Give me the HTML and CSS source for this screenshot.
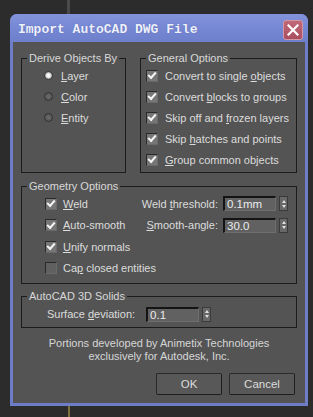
FILE: index.html
```html
<!DOCTYPE html>
<html>
<head>
<meta charset="utf-8">
<link rel="stylesheet" href="styles.css">
</head>
<body>
<div class="desk desk-top"><div class="desk-line grey"></div></div>
<div class="window">
  <div class="titlebar">
    <span class="title">Import AutoCAD DWG File</span>
    <span class="close"><svg width="12" height="12" viewBox="0 0 12 12"><path d="M1.5 1.5 L10.5 10.5 M10.5 1.5 L1.5 10.5" stroke="#fff" stroke-width="2.2" stroke-linecap="square"/></svg></span>
  </div>
  <div class="client">
    <div class="row-top">
      <fieldset class="group derive">
        <legend>Derive Objects By</legend>
        <div class="opt"><span class="radio on"></span><span><u>L</u>ayer</span></div>
        <div class="opt"><span class="radio"></span><span><u>C</u>olor</span></div>
        <div class="opt"><span class="radio"></span><span><u>E</u>ntity</span></div>
      </fieldset>
      <fieldset class="group general">
        <legend>General Options</legend>
        <div class="opt"><span class="check on"></span><span>Convert to single <u>o</u>bjects</span></div>
        <div class="opt"><span class="check on"></span><span>Convert <u>b</u>locks to groups</span></div>
        <div class="opt"><span class="check on"></span><span>Skip off and <u>f</u>rozen layers</span></div>
        <div class="opt"><span class="check on"></span><span>Skip <u>h</u>atches and points</span></div>
        <div class="opt"><span class="check on"></span><span><u>G</u>roup common objects</span></div>
      </fieldset>
    </div>
    <fieldset class="group geometry">
      <legend>Geometry Options</legend>
      <div class="geo">
        <div class="geo-left">
          <div class="opt"><span class="check on"></span><span><u>W</u>eld</span></div>
          <div class="opt"><span class="check on"></span><span><u>A</u>uto-smooth</span></div>
          <div class="opt"><span class="check on"></span><span><u>U</u>nify normals</span></div>
          <div class="opt"><span class="check"></span><span>Ca<u>p</u> closed entities</span></div>
        </div>
        <div class="geo-right">
          <div class="field"><span class="flabel">Weld <u>t</u>hreshold:</span><span class="input">0.1mm</span><span class="spin"><i class="up"></i><i class="down"></i></span></div>
          <div class="field"><span class="flabel"><u>S</u>mooth-angle:</span><span class="input">30.0</span><span class="spin"><i class="up"></i><i class="down"></i></span></div>
        </div>
      </div>
    </fieldset>
    <fieldset class="group solids">
      <legend>AutoCAD 3D Solids</legend>
      <div class="field solid-field"><span class="flabel">Surface <u>d</u>eviation:</span><span class="input">0.1</span><span class="spin"><i class="up"></i><i class="down"></i></span></div>
    </fieldset>
    <p class="credit">Portions developed by Animetix Technologies<br>exclusively for Autodesk, Inc.</p>
    <div class="buttons">
      <button class="btn">OK</button>
      <button class="btn">Cancel</button>
    </div>
  </div>
</div>
<div class="desk desk-bottom"><div class="desk-line yellow"></div></div>
</body>
</html>
```
FILE: styles.css
```css
html, body {
  margin: 0;
  padding: 0;
}
body {
  width: 313px;
  height: 417px;
  overflow: hidden;
  background: #2c2c2c;
  font-family: "Liberation Sans", Arial, sans-serif;
  font-size: 11px;
  color: #dcdcdc;
}
.desk {
  display: flex;
}
.desk-top {
  height: 14px;
}
.desk-bottom {
  height: 11px;
}
.desk-line {
  width: 3px;
  height: 100%;
}
.desk-line.grey {
  margin-left: 67px;
  background: #4a4a4a;
}
.desk-line.yellow {
  margin-left: 68px;
  background: #7f7040;
  width: 2px;
}
.window {
  margin-left: 10px;
  width: 298px;
  height: 392px;
  box-sizing: border-box;
  background: #6d7dc8;
  border-radius: 7px 7px 0 0;
  padding: 0 3px 3px 3px;
  display: flex;
  flex-direction: column;
}
.titlebar {
  height: 28px;
  margin: 0 -3px;
  border-radius: 7px 7px 0 0;
  background: linear-gradient(#8393db, #7485d2 60%, #6e7fcc);
  display: flex;
  align-items: center;
  padding: 0 5px 0 8px;
  flex-shrink: 0;
}
.title {
  flex: 1;
  font-family: "Liberation Mono", "DejaVu Sans Mono", monospace;
  font-weight: bold;
  font-size: 13px;
  color: #eef0fb;
  padding-top: 3px;
  text-shadow: 0 0 1px #5060a8;
}
.close {
  width: 20px;
  height: 20px;
  box-sizing: border-box;
  border: 1px solid #d596a2;
  border-radius: 3px;
  background: linear-gradient(#c06878, #a84e60);
  display: flex;
  align-items: center;
  justify-content: center;
  margin-top: 3px;
}
.client {
  flex: 1;
  background: #545454;
  padding: 9px 8px 0 8px;
  display: flex;
  flex-direction: column;
}
.row-top {
  display: flex;
  gap: 14px;
}
.group {
  margin: 0;
  border: 1px solid #1c1c1c;
  min-width: 0;
  box-sizing: border-box;
}
.group legend {
  font-size: 11px;
  line-height: 14px;
  padding: 0 2px;
  color: #d8d8d8;
  white-space: nowrap;
}
.derive {
  width: 105px;
  padding: 0 0 2px 22px;
}
.derive legend {
  margin-left: -17px;
}
.general {
  flex: 1;
  padding: 0 0 2px 5px;
}
.general legend {
  margin-left: 0;
}
.opt {
  display: flex;
  align-items: center;
  gap: 7px;
  height: 21px;
  white-space: nowrap;
}
.derive .opt {
  gap: 8px;
}
u {
  text-decoration: underline;
  text-underline-offset: 1px;
}
.radio {
  width: 9px;
  height: 9px;
  border-radius: 50%;
  box-sizing: border-box;
  background: radial-gradient(circle at 50% 50%, #6a6a6a 0, #5a5a5a 60%, #3a3a3a 100%);
  border: 1px solid #333;
  flex-shrink: 0;
}
.radio.on {
  background: radial-gradient(circle at 50% 50%, #ffffff 0, #f0f0f0 35%, #a8a8a8 70%, #666 100%);
  border-color: #3a3a3a;
}
.check {
  width: 12px;
  height: 12px;
  box-sizing: border-box;
  border: 1px solid #2a2a2a;
  border-right-color: #6a6a6a;
  border-bottom-color: #6a6a6a;
  background: #606060;
  flex-shrink: 0;
  display: flex;
  align-items: center;
  justify-content: center;
}
.check.on {
  background: #767676;
}
.check.on::after {
  content: "";
  width: 6px;
  height: 3px;
  border-left: 2px solid #f4f4f4;
  border-bottom: 2px solid #f4f4f4;
  transform: translate(0, -1px) rotate(-48deg);
}
.geometry {
  margin-top: 6px;
  padding: 0 8px 4px 23px;
}
.geometry legend {
  margin-left: -18px;
}
.geo {
  display: flex;
  justify-content: space-between;
}
.geo-left {
  flex: 0 0 80px;
  min-width: 0;
}
.geo-left .opt {
  height: 21.5px;
  gap: 6px;
}
.geo-right {
  display: flex;
  flex-direction: column;
}
.field {
  display: flex;
  align-items: center;
  height: 21.5px;
  justify-content: flex-end;
}
.flabel {
  margin-right: 5px;
  white-space: nowrap;
}
.input {
  width: 53px;
  height: 15px;
  box-sizing: border-box;
  background: #616161;
  border-top: 2px solid #141414;
  border-left: 2px solid #141414;
  border-right: 1px solid #6e6e6e;
  border-bottom: 1px solid #6e6e6e;
  color: #ececec;
  font-size: 11.5px;
  line-height: 12px;
  padding-left: 2px;
}
.spin {
  width: 9px;
  height: 15px;
  margin-left: 3px;
  box-sizing: border-box;
  background: #686868;
  border: 1px solid #3a3a3a;
  display: flex;
  flex-direction: column;
  align-items: center;
  justify-content: center;
  gap: 2px;
}
.spin i {
  display: block;
  width: 0;
  height: 0;
  border-left: 2.5px solid transparent;
  border-right: 2.5px solid transparent;
}
.spin .up {
  border-bottom: 3px solid #e0e0e0;
}
.spin .down {
  border-top: 3px solid #e0e0e0;
}
.solids {
  margin-top: 5px;
  padding: 0 0 2px 25px;
}
.solids legend {
  margin-left: -20px;
}
.solid-field {
  justify-content: flex-start;
  height: 22px;
}
.solid-field .flabel {
  margin-right: 11px;
}
.credit {
  margin: 9px 0 0 0;
  text-align: center;
  line-height: 13px;
  color: #d6d6d6;
}
.buttons {
  display: flex;
  justify-content: flex-end;
  gap: 7px;
  margin-top: 10px;
  padding-right: 2px;
}
.btn {
  width: 66px;
  height: 22px;
  background: #585858;
  border: 1px solid #2a2a2a;
  border-right-color: #1e1e1e;
  border-bottom-color: #1e1e1e;
  border-radius: 2px;
  color: #dcdcdc;
  font-family: "Liberation Sans", Arial, sans-serif;
  font-size: 11.5px;
  padding: 0;
}
```
